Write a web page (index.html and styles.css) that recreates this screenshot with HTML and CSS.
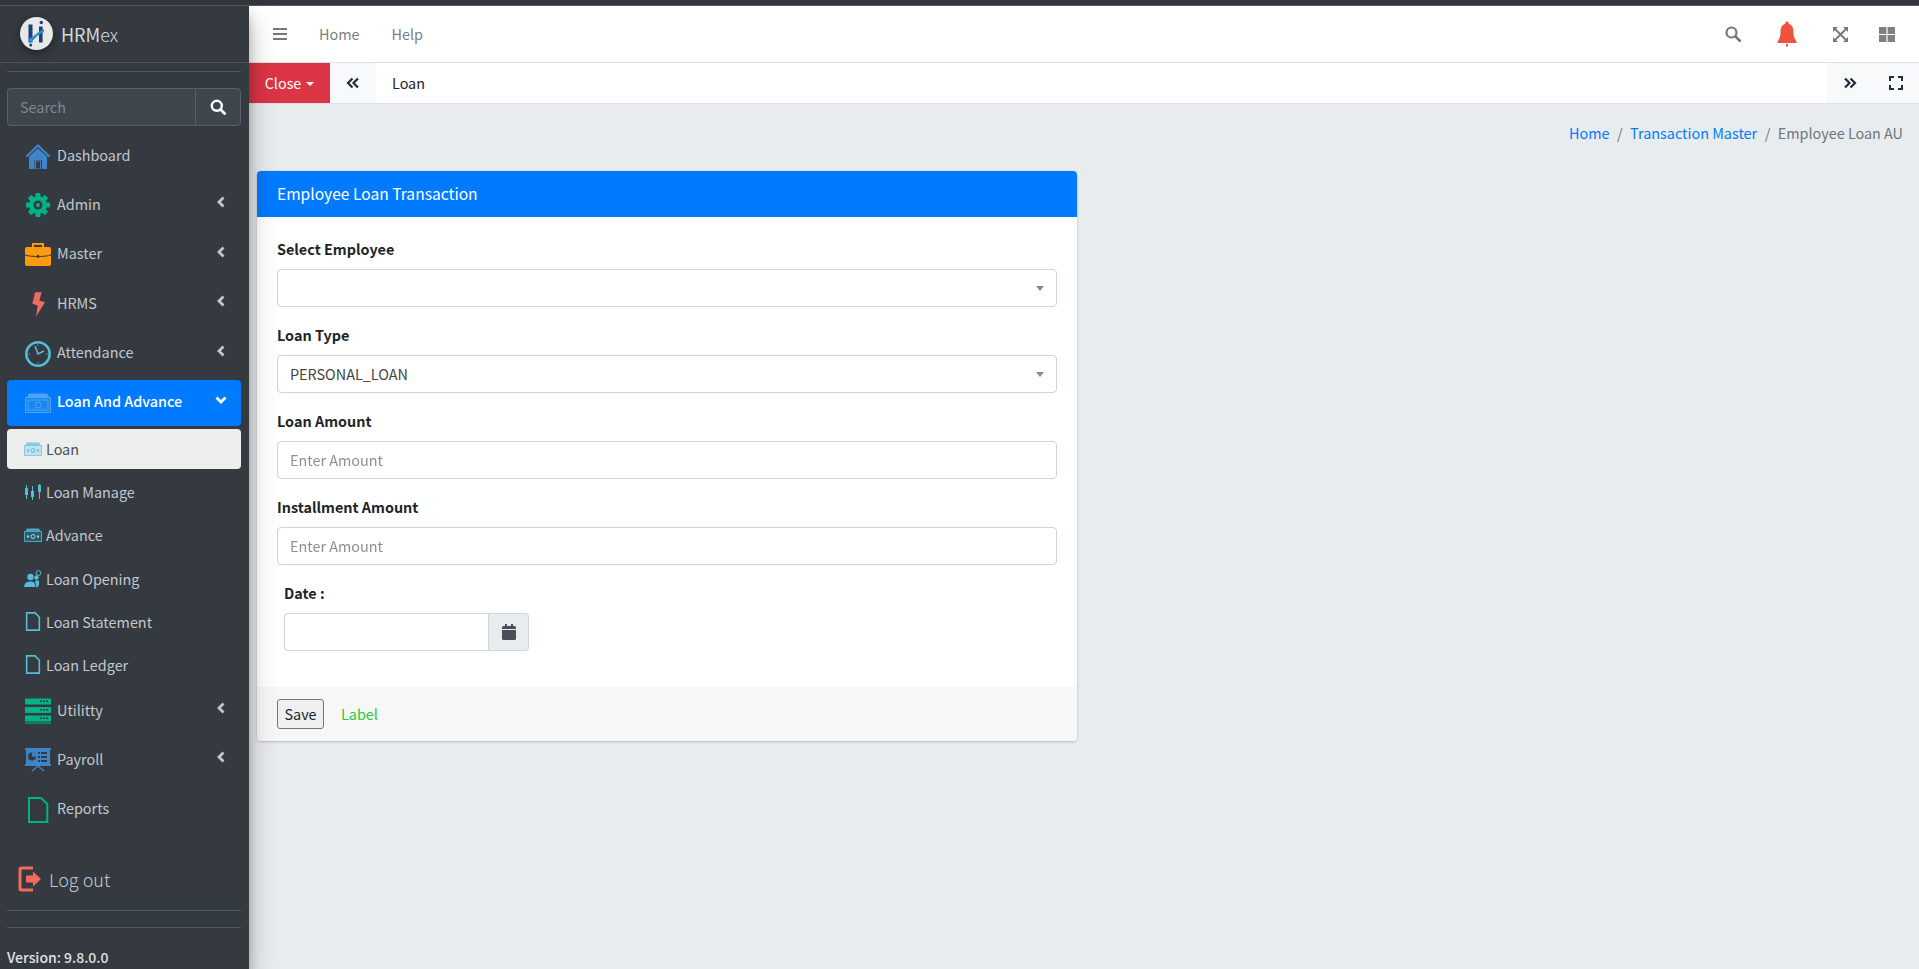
FILE: index.html
```html
<!DOCTYPE html>
<html lang="en">
<head>
  <meta charset="UTF-8">
  <title>Employee Loan AU</title>
  <link rel="stylesheet" href="styles.css">
</head>
<body>
<div class="top-strip"></div>
<div class="wrapper">

  <aside class="sidebar">
    <a class="brand">
      <svg class="brand-logo" viewBox="0 0 33 33">
        <circle cx="16.5" cy="16.5" r="16.5" fill="#e6e8ea"/>
        <rect x="8.500" y="7.500" width="4" height="18" fill="#1d3f75"/>
        <rect x="19" y="9.500" width="3.600" height="16" fill="#1d3f75"/>
        <path d="M8 22 C14 20 18 14 24 12 L24 15 C18 17 15 22 10 26 Z" fill="#2a93c9"/>
        <circle cx="21.300" cy="5.500" r="1.700" fill="#1d3f75"/>
        <circle cx="10.700" cy="28" r="1.500" fill="#1d3f75"/>
      </svg>
      <span class="brand-text">HRM<span class="brand-light">ex</span></span>
    </a>
    <div class="sidebar-inner">
      <hr class="side-line first">
      <div class="side-search">
        <input class="side-search-input" type="text" placeholder="Search">
        <button class="side-search-btn">
          <svg width="16" height="16" viewBox="0 0 16 16"><circle cx="6.800" cy="6.800" r="5" fill="none" stroke="#fff" stroke-width="2.400"/><path d="M10.500 10.500 L14.600 14.600" stroke="#fff" stroke-width="2.800" stroke-linecap="round"/></svg>
        </button>
      </div>

      <nav class="menu">
        <a class="menu-item">
          <svg class="menu-icon" viewBox="0 0 26 26"><path d="M13 1 L0.500 13 L2 14.500 L13 4 L24 14.500 L25.500 13 Z" fill="#3d85c6"/><path d="M4 13.500 L13 5.500 L22 13.500 V26 H17 V17 H9.500 V26 H4 Z" fill="#3d85c6"/><rect x="10.500" y="18" width="5" height="8" fill="none" stroke="#3d85c6"/></svg>
          <span>Dashboard</span>
        </a>
        <a class="menu-item">
          <svg class="menu-icon" viewBox="0 0 26 26"><g fill="#00b386"><circle cx="13" cy="13" r="9"/><rect x="10.500" y="1" width="5" height="24" rx="1"/><rect x="10.500" y="1" width="5" height="24" rx="1" transform="rotate(45 13 13)"/><rect x="10.500" y="1" width="5" height="24" rx="1" transform="rotate(90 13 13)"/><rect x="10.500" y="1" width="5" height="24" rx="1" transform="rotate(135 13 13)"/></g><circle cx="13" cy="13" r="4.500" fill="#343a40"/><circle cx="13" cy="13" r="2" fill="#00b386"/></svg>
          <span>Admin</span>
          <svg class="chevron" viewBox="0 0 10 12"><path d="M7.500 1.500 L3 6 L7.500 10.500" fill="none" stroke="#c2c7d0" stroke-width="2.800"/></svg>
        </a>
        <a class="menu-item">
          <svg class="menu-icon" viewBox="0 0 26 26"><rect x="0" y="5" width="26" height="19" rx="2" fill="#ff9a0d"/><path d="M8 5 V2 H18 V5" fill="none" stroke="#ff9a0d" stroke-width="2"/><path d="M0 13 C6 15 20 15 26 13" fill="none" stroke="#343a40" stroke-width="1"/><rect x="12" y="13" width="2" height="3" fill="#343a40"/></svg>
          <span>Master</span>
          <svg class="chevron" viewBox="0 0 10 12"><path d="M7.500 1.500 L3 6 L7.500 10.500" fill="none" stroke="#c2c7d0" stroke-width="2.800"/></svg>
        </a>
        <a class="menu-item">
          <svg class="menu-icon" viewBox="0 0 26 26"><path d="M10 1.200 H16.700 L14.300 9.500 L20 11.200 L11 25.500 L12.700 14.500 L7.300 12.800 Z" fill="#ef6a5f"/></svg>
          <span>HRMS</span>
          <svg class="chevron" viewBox="0 0 10 12"><path d="M7.500 1.500 L3 6 L7.500 10.500" fill="none" stroke="#c2c7d0" stroke-width="2.800"/></svg>
        </a>
        <a class="menu-item">
          <svg class="menu-icon" viewBox="0 0 26 26"><circle cx="13" cy="13" r="11.700" fill="none" stroke="#55bcd9" stroke-width="2.500"/><path d="M10 5 L13 13 L19 10" fill="none" stroke="#55bcd9" stroke-width="1.600"/><path d="M13 3.500 V5 M13 21 V22.500 M3.500 13 H5 M21 13 H22.500" stroke="#55bcd9"/></svg>
          <span>Attendance</span>
          <svg class="chevron" viewBox="0 0 10 12"><path d="M7.500 1.500 L3 6 L7.500 10.500" fill="none" stroke="#c2c7d0" stroke-width="2.800"/></svg>
        </a>
        <a class="menu-item active">
          <svg class="menu-icon" viewBox="0 0 26 20"><path d="M2 4 L4 0.500 H22 L24 4 Z" fill="#4da3f5"/><rect x="0.500" y="4.500" width="25" height="15" fill="#1a86f0" stroke="#4da3f5"/><rect x="3" y="7" width="20" height="10" fill="none" stroke="#4da3f5"/><circle cx="13" cy="12" r="3" fill="none" stroke="#4da3f5"/></svg>
          <span>Loan And Advance</span>
          <svg class="chevron" viewBox="0 0 12 10"><path d="M1.500 2.500 L6 7 L10.500 2.500" fill="none" stroke="#fff" stroke-width="2.800"/></svg>
        </a>

        <a class="sub-item current">
          <svg class="sub-icon" viewBox="0 0 18 14"><path d="M1.500 3 L3 0.500 H15 L16.500 3 Z" fill="#86cbe3"/><rect x="0.500" y="3.500" width="17" height="10" fill="#bfe3ef" stroke="#86cbe3"/><circle cx="9" cy="8.500" r="2" fill="none" stroke="#6cb8d4"/><rect x="3" y="7.500" width="2" height="2" fill="#6cb8d4"/><rect x="13" y="7.500" width="2" height="2" fill="#6cb8d4"/></svg>
          <span>Loan</span>
        </a>
        <a class="sub-item">
          <svg class="sub-icon" viewBox="0 0 18 16"><g fill="#55bcd9"><rect x="1" y="4" width="3" height="7"/><rect x="2" y="1" width="1" height="14"/><rect x="7" y="7" width="3" height="6"/><rect x="8" y="2" width="1" height="14"/><rect x="14" y="1" width="3" height="7"/><rect x="15" y="0" width="1" height="15"/></g></svg>
          <span>Loan Manage</span>
        </a>
        <a class="sub-item">
          <svg class="sub-icon" viewBox="0 0 18 14"><path d="M1.500 3 L3 0.500 H15 L16.500 3 Z" fill="#4aa3bf"/><rect x="0.500" y="3.500" width="17" height="10" fill="#2f5b6e" stroke="#4aa3bf"/><circle cx="9" cy="8.500" r="2" fill="none" stroke="#9fd8ea"/><rect x="3" y="7.500" width="2" height="2" fill="#9fd8ea"/><rect x="13" y="7.500" width="2" height="2" fill="#9fd8ea"/></svg>
          <span>Advance</span>
        </a>
        <a class="sub-item">
          <svg class="sub-icon" viewBox="0 0 18 18"><g fill="#55bcd9"><circle cx="6.500" cy="7" r="3.200"/><path d="M0 17 C1 12 3 11.500 6.500 11.500 C10 11.500 11 13 11.500 17 Z"/><circle cx="12.500" cy="7.500" r="2.200"/><path d="M11 10.500 H15 V15 L13.500 17.500 H12.500 Z"/></g><circle cx="14.500" cy="3" r="2.400" fill="none" stroke="#55bcd9"/></svg>
          <span>Loan Opening</span>
        </a>
        <a class="sub-item">
          <svg class="sub-icon doc" viewBox="0 0 14 18"><path d="M1 0.800 H9 L13 5 V17.200 H1 Z" fill="none" stroke="#55bcd9" stroke-width="1.500"/></svg>
          <span>Loan Statement</span>
        </a>
        <a class="sub-item">
          <svg class="sub-icon doc" viewBox="0 0 14 18"><path d="M1 0.800 H9 L13 5 V17.200 H1 Z" fill="none" stroke="#55bcd9" stroke-width="1.500"/></svg>
          <span>Loan Ledger</span>
        </a>

        <a class="menu-item">
          <svg class="menu-icon" viewBox="0 0 26 25"><g fill="#00b386"><rect y="0" width="26" height="6"/><rect y="8.500" width="26" height="6"/><rect y="17" width="26" height="6"/><rect y="24" width="26" height="1"/></g><g fill="#343a40"><rect x="15" y="2" width="2" height="1.500"/><rect x="18" y="2" width="2" height="1.500"/><rect x="21" y="2" width="2" height="1.500"/><rect x="15" y="10.500" width="2" height="1.500"/><rect x="18" y="10.500" width="2" height="1.500"/><rect x="21" y="10.500" width="2" height="1.500"/><rect x="15" y="19" width="2" height="1.500"/><rect x="18" y="19" width="2" height="1.500"/><rect x="21" y="19" width="2" height="1.500"/></g></svg>
          <span>Utilitty</span>
          <svg class="chevron" viewBox="0 0 10 12"><path d="M7.500 1.500 L3 6 L7.500 10.500" fill="none" stroke="#c2c7d0" stroke-width="2.800"/></svg>
        </a>
        <a class="menu-item">
          <svg class="menu-icon" viewBox="0 0 26 24"><rect y="0" width="26" height="2" fill="#3d85c6"/><rect x="1" y="2" width="24" height="14" fill="#3d85c6"/><rect y="16" width="26" height="2" fill="#3d85c6"/><path d="M13 18 L7 23 M13 18 L19 23" stroke="#3d85c6" stroke-width="1.500"/><circle cx="7" cy="8.500" r="4" fill="#343a40"/><path d="M7 8.500 V4.500 A4 4 0 0 1 11 8.500 Z" fill="#3d85c6"/><g fill="#343a40"><rect x="13" y="4" width="2" height="2"/><rect x="16" y="4" width="6" height="2"/><rect x="13" y="8" width="2" height="2"/><rect x="16" y="8" width="6" height="2"/><rect x="13" y="12" width="2" height="2"/><rect x="16" y="12" width="6" height="2"/></g></svg>
          <span>Payroll</span>
          <svg class="chevron" viewBox="0 0 10 12"><path d="M7.500 1.500 L3 6 L7.500 10.500" fill="none" stroke="#c2c7d0" stroke-width="2.800"/></svg>
        </a>
        <a class="menu-item">
          <svg class="menu-icon" viewBox="0 0 26 26"><path d="M4 1 H16 L22.300 7 V25 H4 Z" fill="none" stroke="#00b386" stroke-width="2"/></svg>
          <span>Reports</span>
        </a>
      </nav>

      <a class="logout">
        <svg class="logout-icon" width="24" height="26" viewBox="0 0 24 26"><path d="M15 2 H3.500 Q2 2 2 3.500 V22.500 Q2 24 3.500 24 H15" fill="none" stroke="#ef6a5f" stroke-width="3"/><path d="M8 9.500 H15 V5.500 L23 13 L15 20.500 V16.500 H8 Z" fill="#ef6a5f"/></svg>
        <span>Log out</span>
      </a>
      <hr class="side-line">
      <hr class="side-line second">
    </div>
    <div class="version">Version: 9.8.0.0</div>
  </aside>

  <div class="main">
    <header class="navbar">
      <ul class="nav-left">
        <li class="nav-burger"><svg width="14" height="12" viewBox="0 0 14 12"><path d="M0 1 H14 M0 6 H14 M0 11 H14" stroke="#777" stroke-width="2"/></svg></li>
        <li><a class="nav-link">Home</a></li>
        <li><a class="nav-link">Help</a></li>
      </ul>
      <ul class="nav-right">
        <li><svg width="16" height="16" viewBox="0 0 16 16"><circle cx="6.500" cy="6.500" r="5" fill="none" stroke="#777" stroke-width="2.200"/><path d="M10.500 10.500 L15 15" stroke="#777" stroke-width="2.600" stroke-linecap="round"/></svg></li>
        <li><svg width="20" height="26" viewBox="0 0 20 26"><path d="M10 0.500 a1.500 1.500 0 0 1 1.500 2 C15.500 4 16.500 7 16.500 11 C16.500 15 17 17 19.500 20.500 V22 H0.500 V20.500 C3 17 3.500 15 3.500 11 C3.500 7 4.500 4 8.500 2.500 A1.500 1.500 0 0 1 10 0.500 Z" fill="#f0533d"/><rect x="9" y="23" width="2" height="2.500" fill="#f0533d"/></svg></li>
        <li><svg width="15" height="15" viewBox="0 0 15 15"><path d="M1 1 L14 14 M14 1 L1 14" stroke="#777" stroke-width="1.800"/><path d="M0 0 H5 L0 5 Z M15 0 V5 L10 0 Z M0 15 V10 L5 15 Z M15 15 H10 L15 10 Z" fill="#777"/></svg></li>
        <li><svg width="16" height="15" viewBox="0 0 16 15"><rect width="7.400" height="7" fill="#808080"/><rect x="8.600" width="7.400" height="7" fill="#808080"/><rect y="8" width="7.400" height="7" fill="#808080"/><rect x="8.600" y="8" width="7.400" height="7" fill="#808080"/></svg></li>
      </ul>
    </header>

    <div class="tabbar">
      <button class="tab-close">Close<i class="caret"></i></button>
      <a class="tab-arrow">
        <svg width="14" height="12" viewBox="0 0 14 12"><path d="M6.500 1.500 L2 6 L6.500 10.500 M12 1.500 L7.500 6 L12 10.500" fill="none" stroke="#1f2d3d" stroke-width="2.200"/></svg>
      </a>
      <span class="tab-title">Loan</span>
      <div class="tab-right">
        <a class="tab-arrow-right">
          <svg width="14" height="12" viewBox="0 0 14 12"><path d="M2 1.500 L6.500 6 L2 10.500 M7.500 1.500 L12 6 L7.500 10.500" fill="none" stroke="#1f2d3d" stroke-width="2.200"/></svg>
        </a>
        <a class="tab-expand">
          <svg width="14" height="14" viewBox="0 0 14 14"><path d="M1 5 V1 H5 M9 1 H13 V5 M13 9 V13 H9 M5 13 H1 V9" fill="none" stroke="#1f2d3d" stroke-width="2"/></svg>
        </a>
      </div>
    </div>

    <ol class="breadcrumb">
      <li><a>Home</a></li>
      <li class="sep">/</li>
      <li><a>Transaction Master</a></li>
      <li class="sep">/</li>
      <li class="crumb-active">Employee Loan AU</li>
    </ol>

    <section class="card">
      <div class="card-header">Employee Loan Transaction</div>
      <div class="card-body">
        <div class="form-group">
          <label>Select Employee</label>
          <div class="select-box"><span class="select-text"></span><i class="select-arrow"></i></div>
        </div>
        <div class="form-group">
          <label>Loan Type</label>
          <div class="select-box"><span class="select-text">PERSONAL_LOAN</span><i class="select-arrow"></i></div>
        </div>
        <div class="form-group">
          <label>Loan Amount</label>
          <input class="form-control" type="text" placeholder="Enter Amount">
        </div>
        <div class="form-group">
          <label>Installment Amount</label>
          <input class="form-control" type="text" placeholder="Enter Amount">
        </div>
        <div class="form-group date-group">
          <label>Date :</label>
          <div class="input-group">
            <input class="form-control date-input" type="text">
            <span class="input-addon">
              <svg width="14" height="16" viewBox="0 0 14 16"><path d="M0 6 H14 V14.500 Q14 16 12.500 16 H1.500 Q0 16 0 14.500 Z" fill="#495057"/><path d="M0 5 V3.500 Q0 2 1.500 2 H3 V0 H5 V2 H9 V0 H11 V2 H12.500 Q14 2 14 3.500 V5 Z" fill="#495057"/></svg>
            </span>
          </div>
        </div>
      </div>
      <div class="card-footer">
        <button class="save-btn">Save</button>
        <span class="footer-label">Label</span>
      </div>
    </section>
  </div>
</div>
</body>
</html>
```

FILE: styles.css
```css
* {
  box-sizing: border-box;
}

html, body {
  height: 100%;
}

body {
  margin: 0;
  overflow: hidden;
  font-family: "Noto Sans CJK SC", "Noto Sans", sans-serif;
  font-size: 14.400px;
  line-height: 24px;
  color: #212529;
  background-color: #e9ecef;
}

a {
  text-decoration: none;
}

.top-strip {
  height: 6px;
  background-color: #33363b;
  border-bottom: 1px solid #56595d;
}

.wrapper {
  display: flex;
  height: 963px;
}

/* sidebar */
.sidebar {
  position: relative;
  z-index: 2;
  flex: none;
  width: 249px;
  display: flex;
  flex-direction: column;
  background-color: #343a40;
  color: #c2c7d0;
  box-shadow: 0 14px 28px rgba(0, 0, 0, 0.25), 0 10px 10px rgba(0, 0, 0, 0.22);
}

.brand {
  display: flex;
  align-items: center;
  height: 57px;
  padding: 0 0 1px 20px;
  border-bottom: 1px solid #4b545c;
}

.brand-logo {
  width: 33px;
  height: 33px;
  filter: drop-shadow(0 3px 5px rgba(0, 0, 0, 0.4));
}

.brand-text {
  margin-left: 8px;
  font-size: 18px;
  color: #d5d8dc;
}

.brand-light {
  font-weight: 300;
}

.sidebar-inner {
  padding: 0 8px 0 7px;
}

.side-line {
  margin: 0;
  border: 0;
  border-top: 1px solid #4f5962;
}

.side-line.first {
  margin-top: 8px;
}

.side-line.second {
  margin-top: 16px;
}

.side-search {
  display: flex;
  height: 38px;
  margin-top: 16px;
}

.side-search-input {
  flex: 1;
  min-width: 0;
  padding: 0 12px;
  font: inherit;
  color: #fff;
  background-color: #3f474e;
  border: 1px solid #56606a;
  border-right: 0;
  border-radius: 4px 0 0 4px;
}

.side-search-input::placeholder {
  color: #7f868d;
}

.side-search-btn {
  display: flex;
  align-items: center;
  justify-content: center;
  width: 46px;
  padding: 0;
  background-color: #3f474e;
  border: 1px solid #56606a;
  border-radius: 0 4px 4px 0;
}

.menu {
  margin-top: 7px;
}

.menu-item {
  display: flex;
  align-items: center;
  height: 46px;
  margin-bottom: 3.400px;
  padding: 0 14px 0 18px;
  border-radius: 4px;
  color: #c2c7d0;
}

.menu-item span {
  margin-bottom: 3px;
}

.menu-item.active {
  margin-bottom: 3px;
  color: #fff;
  font-weight: 500;
  background-color: #007bff;
}

.menu-icon {
  flex: none;
  width: 26px;
  height: 26px;
  margin-right: 6px;
}

.menu-item .chevron {
  flex: none;
  width: 12px;
  height: 12px;
  margin: -6px 0 0 auto;
}

.sub-item {
  display: flex;
  align-items: center;
  height: 40px;
  margin-bottom: 3.200px;
  padding: 0 0 0 17px;
  border-radius: 4px;
  color: #c2c7d0;
}

.sub-item.current {
  color: #495057;
  background-color: #eceeed;
}

.sub-icon {
  flex: none;
  width: 18px;
  height: 18px;
  margin-right: 4px;
}

.sub-icon.doc {
  height: 19px;
}

.logout {
  display: flex;
  align-items: center;
  height: 46px;
  margin-top: 23.500px;
  margin-bottom: 8px;
  padding-left: 11px;
  font-size: 18px;
  font-weight: 300;
  color: #c2c7d0;
}

.logout-icon {
  margin-right: 7px;
}

.version {
  position: absolute;
  left: 7px;
  bottom: 0;
  font-size: 14px;
  font-weight: 500;
  color: #e0e2e5;
}

/* top bars */
.main {
  flex: 1;
  min-width: 0;
}

.navbar {
  display: flex;
  align-items: center;
  justify-content: space-between;
  height: 57px;
  background-color: #fff;
  border-bottom: 1px solid #dee2e6;
}

.nav-left, .nav-right {
  display: flex;
  align-items: center;
  margin: 0;
  padding: 0;
  list-style: none;
}

.nav-left li {
  margin-right: 32px;
}

.nav-burger {
  display: flex;
  margin-left: 24px;
}

.nav-link {
  color: #7b7f83;
}

.nav-right {
  gap: 36px;
  padding-right: 24px;
}

.nav-right li {
  display: flex;
}

.nav-right li:last-child {
  margin-left: -5px;
}

.tabbar {
  display: flex;
  align-items: stretch;
  height: 41px;
  background-color: #fff;
  border-bottom: 1px solid #dee2e6;
}

.tab-close {
  width: 81px;
  padding: 0;
  font: inherit;
  color: #fff;
  background-color: #dc3545;
  border: 0;
}

.caret {
  display: inline-block;
  margin-left: 5px;
  vertical-align: 3px;
  border-top: 4.800px solid #fff;
  border-left: 4.800px solid transparent;
  border-right: 4.800px solid transparent;
}

.tab-arrow {
  display: flex;
  align-items: center;
  justify-content: center;
  width: 46px;
  background-color: #f8f9fa;
}

.tab-title {
  align-self: center;
  margin-left: 16px;
}

.tab-right {
  display: flex;
  margin-left: auto;
  background-color: #f8f9fa;
}

.tab-arrow-right, .tab-expand {
  display: flex;
  align-items: center;
  justify-content: center;
  width: 46px;
}

/* content */
.breadcrumb {
  display: flex;
  justify-content: flex-end;
  margin: 0;
  padding: 17px 16px 0 0;
  list-style: none;
}

.breadcrumb a {
  color: #007bff;
}

.sep {
  padding: 0 7.500px;
  color: #6c757d;
}

.crumb-active {
  color: #6c757d;
}

.card {
  width: 820px;
  margin: 26px 0 0 8px;
  background-color: #fff;
  border-radius: 4px;
  box-shadow: 0 0 1px rgba(0, 0, 0, 0.125), 0 1px 3px rgba(0, 0, 0, 0.2);
}

.card-header {
  height: 46px;
  padding: 9.500px 20px;
  font-size: 15.600px;
  color: #fff;
  background-color: #007bff;
  border-radius: 4px 4px 0 0;
}

.card-body {
  padding: 20px 20px 20px;
}

.form-group {
  margin-bottom: 16px;
}

label {
  display: block;
  margin-bottom: 8px;
  font-weight: 700;
}

.select-box {
  position: relative;
  height: 38px;
  padding: 6px 12px;
  color: #444;
  background-color: #fff;
  border: 1px solid #ced4da;
  border-radius: 4px;
}

.select-arrow {
  position: absolute;
  top: 16px;
  right: 12px;
  border-top: 5px solid #888;
  border-left: 4px solid transparent;
  border-right: 4px solid transparent;
}

.form-control {
  display: block;
  width: 100%;
  height: 38px;
  padding: 5px 12px 7px;
  font: inherit;
  color: #495057;
  background-color: #fff;
  border: 1px solid #ced4da;
  border-radius: 4px;
}

.form-control::placeholder {
  color: #6c757d;
  opacity: 0.8;
}

.date-group {
  padding-left: 7px;
}

.input-group {
  display: flex;
  width: 245px;
}

.date-input {
  flex: 1;
  min-width: 0;
  border-radius: 4px 0 0 4px;
}

.input-addon {
  display: flex;
  align-items: center;
  justify-content: center;
  width: 40px;
  background-color: #e9ecef;
  border: 1px solid #ced4da;
  border-left: 0;
  border-radius: 0 4px 4px 0;
}

.card-footer {
  display: flex;
  align-items: center;
  height: 54px;
  padding: 0 20px;
  background-color: #f7f7f7;
  border-radius: 0 0 4px 4px;
}

.save-btn {
  height: 30px;
  width: 47px;
  padding: 0;
  font: inherit;
  color: #212529;
  background-color: #efefef;
  border: 1px solid #767676;
  border-radius: 3px;
}

.footer-label {
  margin-left: 17px;
  color: #1fc93a;
}
```
